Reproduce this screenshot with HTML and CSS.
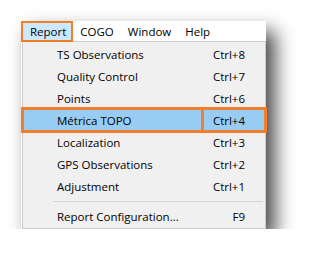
FILE: index.html
```html
<!DOCTYPE html>
<html lang="en">
<head>
    <meta charset="UTF-8">
    <title>Report menu</title>
    <link rel="stylesheet" href="styles.css">
</head>
<body>

    <!-- Menu snapshot -->
    <div class="frame">
        <div class="menubar">
            <span class="menubar-item active">Report</span>
            <span class="menubar-item">COGO</span>
            <span class="menubar-item">Window</span>
            <span class="menubar-item">Help</span>
        </div>

        <div class="dropdown">
            <div class="item"><span class="label">TS Observations</span><span class="key">Ctrl+8</span></div>
            <div class="item"><span class="label">Quality Control</span><span class="key">Ctrl+7</span></div>
            <div class="item"><span class="label">Points</span><span class="key">Ctrl+6</span></div>
            <div class="item highlight"><span class="label">Métrica TOPO</span><span class="key">Ctrl+4</span></div>
            <div class="item"><span class="label">Localization</span><span class="key">Ctrl+3</span></div>
            <div class="item"><span class="label">GPS Observations</span><span class="key">Ctrl+2</span></div>
            <div class="item"><span class="label">Adjustment</span><span class="key">Ctrl+1</span></div>
            <div class="separator"></div>
            <div class="item"><span class="label">Report Configuration...</span><span class="key">F9</span></div>
        </div>
    </div>

</body>
</html>
```

FILE: styles.css
```css
/* ===== General ===== */
body {
    margin: 0;
    padding: 0;
    background: #ffffff;
    font-family: 'Open Sans', 'Noto Sans', Arial, sans-serif;
    font-size: 11.5px;
    color: #000;
}

/* ===== Snapshot frame ===== */
.frame {
    margin: 21px 0 0 21px;
    width: 245px;
    box-shadow: 9px 10px 18px rgba(0, 0, 0, 0.72);
}

/* ===== Menu bar ===== */
.menubar {
    display: flex;
    height: 20px;
    background: #ffffff;
}

.menubar-item {
    display: flex;
    align-items: center;
    padding: 0 7px;
}

.menubar-item.active {
    padding: 0 7px 0 9px;
    margin-bottom: -1px;
    background: #cce8ff;
    outline: 2px solid #f47f2b;
    outline-offset: -2px;
}

/* ===== Dropdown ===== */
.dropdown {
    margin-left: 1px;
    padding: 1px 0 1px;
    background: #f0f0f0;
    border: 1px solid #cccccc;
}

.item {
    display: flex;
    align-items: center;
    height: 22px;
}

.label {
    flex: 1;
    padding-left: 34px;
}

.key {
    width: 41px;
    padding-right: 20px;
    text-align: right;
}

.item.highlight {
    background: #99ccf3;
    outline: 3px solid #f47f2b;
    outline-offset: -1px;
}

.item.highlight .key {
    align-self: stretch;
    display: flex;
    align-items: center;
    justify-content: flex-end;
    border-left: 3px solid #f47f2b;
}

.separator {
    height: 1px;
    margin: 4px 2px 3px 30px;
    background: #d7d7d7;
}
```
